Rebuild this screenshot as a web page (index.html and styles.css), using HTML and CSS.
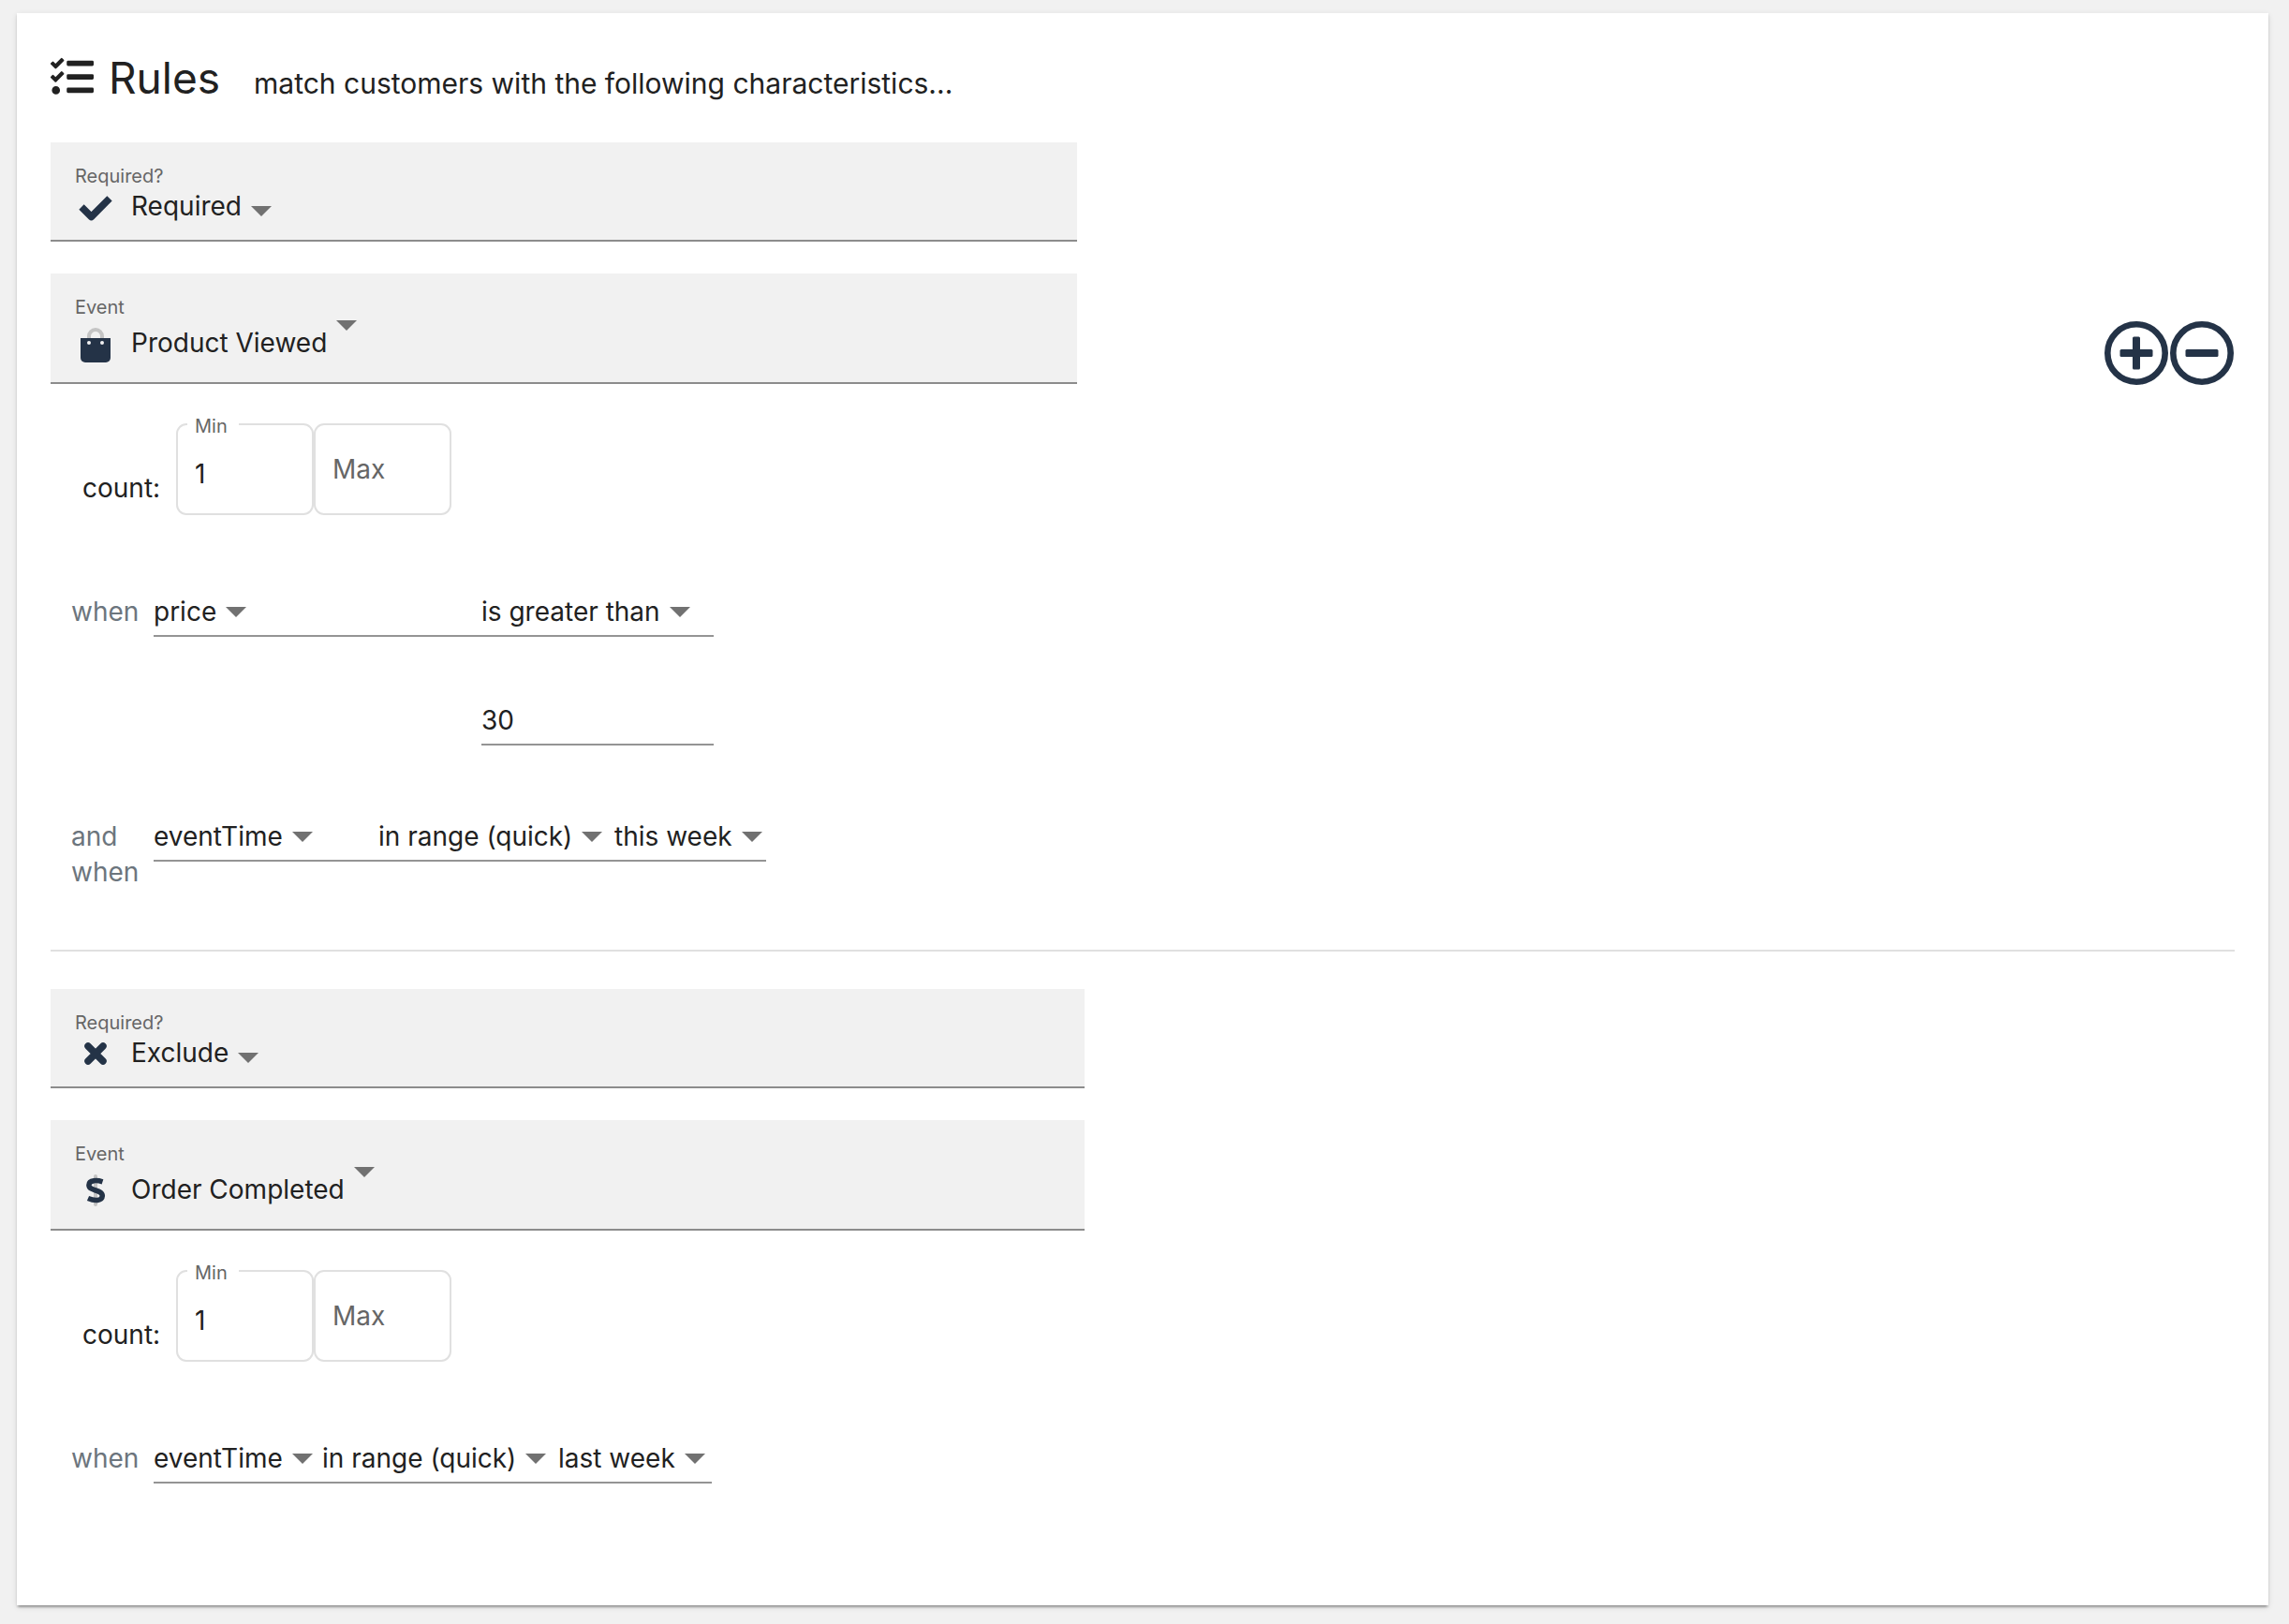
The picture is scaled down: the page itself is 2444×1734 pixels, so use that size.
FILE: index.html
```html
<!DOCTYPE html>
<html lang="en">
<head>
<meta charset="utf-8">
<title>Rules</title>
<link rel="stylesheet" href="styles.css">
</head>
<body>
<svg class="defs" aria-hidden="true">
  <symbol id="caret" viewBox="0 0 22 11"><path d="M0 0h22L11 11z"/></symbol>
</svg>
<main class="card">
  <header class="header">
    <h1 class="title"><svg class="title-icon" viewBox="0 0 512 512" aria-hidden="true"><path d="M139.61 35.5a12 12 0 0 0-17 0L58.93 98.81l-22.7-22.12a12 12 0 0 0-17 0L3.53 92.41a12 12 0 0 0 0 17l47.59 47.4a12.78 12.78 0 0 0 17.61 0l15.59-15.62L156.52 69a12.09 12.09 0 0 0 .09-17zm0 159.19a12 12 0 0 0-17 0l-63.68 63.72-22.7-22.1a12 12 0 0 0-17 0L3.53 252a12 12 0 0 0 0 17L51 316.5a12.77 12.77 0 0 0 17.6 0l15.7-15.69 72.2-72.22a12 12 0 0 0 .09-16.9zM64 368c-26.49 0-48.59 21.5-48.59 48S37.53 464 64 464a48 48 0 0 0 0-96zm432 16H208a16 16 0 0 0-16 16v32a16 16 0 0 0 16 16h288a16 16 0 0 0 16-16v-32a16 16 0 0 0-16-16zm0-320H208a16 16 0 0 0-16 16v32a16 16 0 0 0 16 16h288a16 16 0 0 0 16-16V80a16 16 0 0 0-16-16zm0 160H208a16 16 0 0 0-16 16v32a16 16 0 0 0 16 16h288a16 16 0 0 0 16-16v-32a16 16 0 0 0-16-16z"/></svg>Rules</h1>
    <p class="subtitle">match customers with the following characteristics...</p>
  </header>

  <section class="rule">
    <div class="field">
      <label class="field-label" for="required-1">Required?</label>
      <div class="field-value">
        <svg class="field-icon" viewBox="0 0 44 36" aria-hidden="true"><path class="stroke" stroke-width="7.500" d="M7 19l10.500 10.500L37 9.800"/></svg>
        <select id="required-1" class="select"><option>Required</option></select>
        <svg class="caret caret-low"><use href="#caret"/></svg>
      </div>
    </div>
    <div class="event-row">
      <div class="field">
        <label class="field-label" for="event-1">Event</label>
        <div class="field-value field-value-tall">
          <svg class="field-icon" viewBox="0 0 44 48" aria-hidden="true">
            <path class="faint-stroke" stroke-width="4" d="M15 20v-3a7 7 0 0 1 14 0v3"/>
            <path class="solid" d="M6 19h32v21a5 5 0 0 1-5 5H11a5 5 0 0 1-5-5z"/>
            <circle class="hole" cx="15" cy="24" r="2"/><circle class="hole" cx="29" cy="24" r="2"/>
          </svg>
          <select id="event-1" class="select"><option>Product Viewed</option></select>
          <svg class="caret caret-top"><use href="#caret"/></svg>
        </div>
      </div>
      <div class="actions">
        <button class="round-button" type="button" aria-label="Add rule"><svg viewBox="0 0 70 70" aria-hidden="true"><circle class="ring" cx="35" cy="35" r="30.700"/><rect class="solid" x="17.500" y="31" width="35" height="8" rx="1.500"/><rect class="solid" x="31" y="17.500" width="8" height="35" rx="1.500"/></svg></button>
        <button class="round-button" type="button" aria-label="Remove rule"><svg viewBox="0 0 70 70" aria-hidden="true"><circle class="ring" cx="35" cy="35" r="30.700"/><rect class="solid" x="17.500" y="31" width="35" height="8" rx="1.500"/></svg></button>
      </div>
    </div>
    <div class="count">
      <span class="count-label">count:</span>
      <div class="outlined">
        <input id="min-1" class="outlined-input has-value" type="text" value="1">
        <label class="outlined-label" for="min-1">Min</label>
      </div>
      <div class="outlined">
        <input class="outlined-input" type="text" placeholder="Max" aria-label="Max">
      </div>
    </div>
    <div class="condition">
      <span class="condition-label">when</span>
      <div class="terms terms-number">
        <div class="term"><select class="select" aria-label="Property"><option>price</option></select><svg class="caret"><use href="#caret"/></svg></div>
        <div class="term"><select class="select" aria-label="Operator"><option>is greater than</option></select><svg class="caret"><use href="#caret"/></svg></div>
        <div class="term term-value"><input class="text-input" type="text" value="30" aria-label="Value"></div>
      </div>
    </div>
    <div class="condition condition-next">
      <span class="condition-label">and when</span>
      <div class="terms terms-range-wide">
        <div class="term"><select class="select" aria-label="Property"><option>eventTime</option></select><svg class="caret"><use href="#caret"/></svg></div>
        <div class="term"><select class="select" aria-label="Operator"><option>in range (quick)</option></select><svg class="caret"><use href="#caret"/></svg></div>
        <div class="term"><select class="select" aria-label="Range"><option>this week</option></select><svg class="caret"><use href="#caret"/></svg></div>
      </div>
    </div>
  </section>

  <hr class="divider">

  <section class="rule rule-wide">
    <div class="field">
      <label class="field-label" for="required-2">Required?</label>
      <div class="field-value">
        <svg class="field-icon" viewBox="0 0 44 36" aria-hidden="true"><path class="stroke" stroke-width="7.500" stroke-linecap="round" d="M14 11l16 16M30 11L14 27"/></svg>
        <select id="required-2" class="select"><option>Exclude</option></select>
        <svg class="caret caret-low"><use href="#caret"/></svg>
      </div>
    </div>
    <div class="event-row">
      <div class="field">
        <label class="field-label" for="event-2">Event</label>
        <div class="field-value field-value-tall">
          <svg class="field-icon" viewBox="0 0 44 48" aria-hidden="true">
            <path class="faint-stroke" stroke-width="4" stroke-linecap="round" d="M22 10v30"/>
            <path class="stroke" stroke-width="5.500" d="M29.500 15.800C24 14 15 13.500 14.900 19.200 14.900 26.500 29.600 23.500 29.300 31 29 36.500 21 36.500 14 33.500"/>
          </svg>
          <select id="event-2" class="select"><option>Order Completed</option></select>
          <svg class="caret caret-top"><use href="#caret"/></svg>
        </div>
      </div>
    </div>
    <div class="count">
      <span class="count-label">count:</span>
      <div class="outlined">
        <input id="min-2" class="outlined-input has-value" type="text" value="1">
        <label class="outlined-label" for="min-2">Min</label>
      </div>
      <div class="outlined">
        <input class="outlined-input" type="text" placeholder="Max" aria-label="Max">
      </div>
    </div>
    <div class="condition">
      <span class="condition-label">when</span>
      <div class="terms terms-range">
        <div class="term"><select class="select" aria-label="Property"><option>eventTime</option></select><svg class="caret"><use href="#caret"/></svg></div>
        <div class="term"><select class="select" aria-label="Operator"><option>in range (quick)</option></select><svg class="caret"><use href="#caret"/></svg></div>
        <div class="term"><select class="select" aria-label="Range"><option>last week</option></select><svg class="caret"><use href="#caret"/></svg></div>
      </div>
    </div>
  </section>
</main>
</body>
</html>
```
FILE: styles.css
```css
* { box-sizing: border-box; }

body {
  margin: 0;
  padding: 14px 22px 20px 18px;
  background: #f1f1f1;
  color: #212121;
  font-family: Inter, "Open Sans", sans-serif;
  font-size: 28px;
  line-height: 38px;
}

.defs { display: none; }

.card {
  padding: 33px 36px 130px;
  background: #fff;
  box-shadow: 0 4px 2px -2px rgba(0, 0, 0, .2), 0 2px 2px rgba(0, 0, 0, .14), 0 2px 6px rgba(0, 0, 0, .12);
}

.header {
  display: flex;
  align-items: baseline;
  gap: 36px;
  margin-bottom: 33px;
}

.title {
  margin: 0;
  font-size: 46px;
  font-weight: 400;
  line-height: 72px;
}

.title-icon {
  width: 46px;
  height: 46px;
  margin-right: 16px;
  vertical-align: -5px;
  fill: #212121;
}

.subtitle { margin: 0; font-size: 30px; }

.field {
  width: 47%;
  padding: 22px 26px 18px;
  background: #f1f1f1;
  border-bottom: 2px solid #8c8c8c;
}

.rule-wide .field { width: calc(47% + 8px); }

.field-label {
  display: block;
  color: #666;
  font-size: 20px;
  line-height: 28px;
}

.field-value {
  display: flex;
  align-items: center;
  height: 36px;
}

.field-value-tall { height: 48px; }

.field-icon { width: 44px; height: 100%; margin-right: 16px; }

.solid { fill: #243347; }
.stroke { fill: none; stroke: #243347; stroke-linejoin: round; }
.faint-stroke { fill: none; stroke: #c4c4c4; }
.hole { fill: #f1f1f1; }
.ring { fill: none; stroke: #243347; stroke-width: 6.600; }

.select,
.text-input {
  appearance: none;
  margin: 0;
  padding: 0;
  border: 0;
  background: none;
  color: inherit;
  font: inherit;
}

.select { field-sizing: content; }

.text-input { width: 100%; height: 38px; }

.caret {
  flex: none;
  width: 22px;
  height: 11px;
  margin-left: 10px;
  fill: #717171;
}

.caret-low { margin-top: 10px; }
.caret-top { align-self: flex-start; }

.event-row {
  display: flex;
  align-items: flex-end;
  justify-content: space-between;
  margin-top: 34px;
}

.actions { display: flex; margin-bottom: -2px; }

.round-button {
  width: 70px;
  height: 70px;
  padding: 0;
  border: 0;
  background: none;
}

.round-button svg { display: block; }

.count {
  display: flex;
  align-items: flex-end;
  margin-top: 42px;
  padding-left: 34px;
}

.count-label { width: 100px; margin-bottom: 10px; }

.outlined { position: relative; width: 147px; }

.outlined-input {
  display: block;
  width: 100%;
  height: 98px;
  padding: 0 18px;
  border: 2px solid #e0e0e0;
  border-radius: 11px;
  background: none;
  color: inherit;
  font: inherit;
}

.outlined-input::placeholder { color: #666; opacity: 1; }

.has-value { padding-top: 10px; }

.outlined-label {
  position: absolute;
  top: -7px;
  left: 12px;
  padding: 0 12px 0 8px;
  background: #fff;
  color: #666;
  font-size: 20px;
  line-height: 20px;
}

.condition {
  display: flex;
  align-items: flex-start;
  margin-top: 84px;
  padding-left: 22px;
}

.condition-next { margin-top: 78px; }

.condition-label { width: 88px; padding-right: 8px; color: #6c757d; }

.terms { display: grid; row-gap: 70px; }
.terms-number { grid-template-columns: 350px 248px; }
.terms-range-wide { grid-template-columns: 240px 252px 162px; }
.terms-range { grid-template-columns: 180px 252px 164px; }

.term {
  display: flex;
  align-items: center;
  height: 46px;
  padding-bottom: 6px;
  border-bottom: 2px solid #949494;
}

.term-value { grid-column: 2; }

.divider {
  margin: 64px 0 40px;
  border: 0;
  border-top: 2px solid #e0e0e0;
}
```
